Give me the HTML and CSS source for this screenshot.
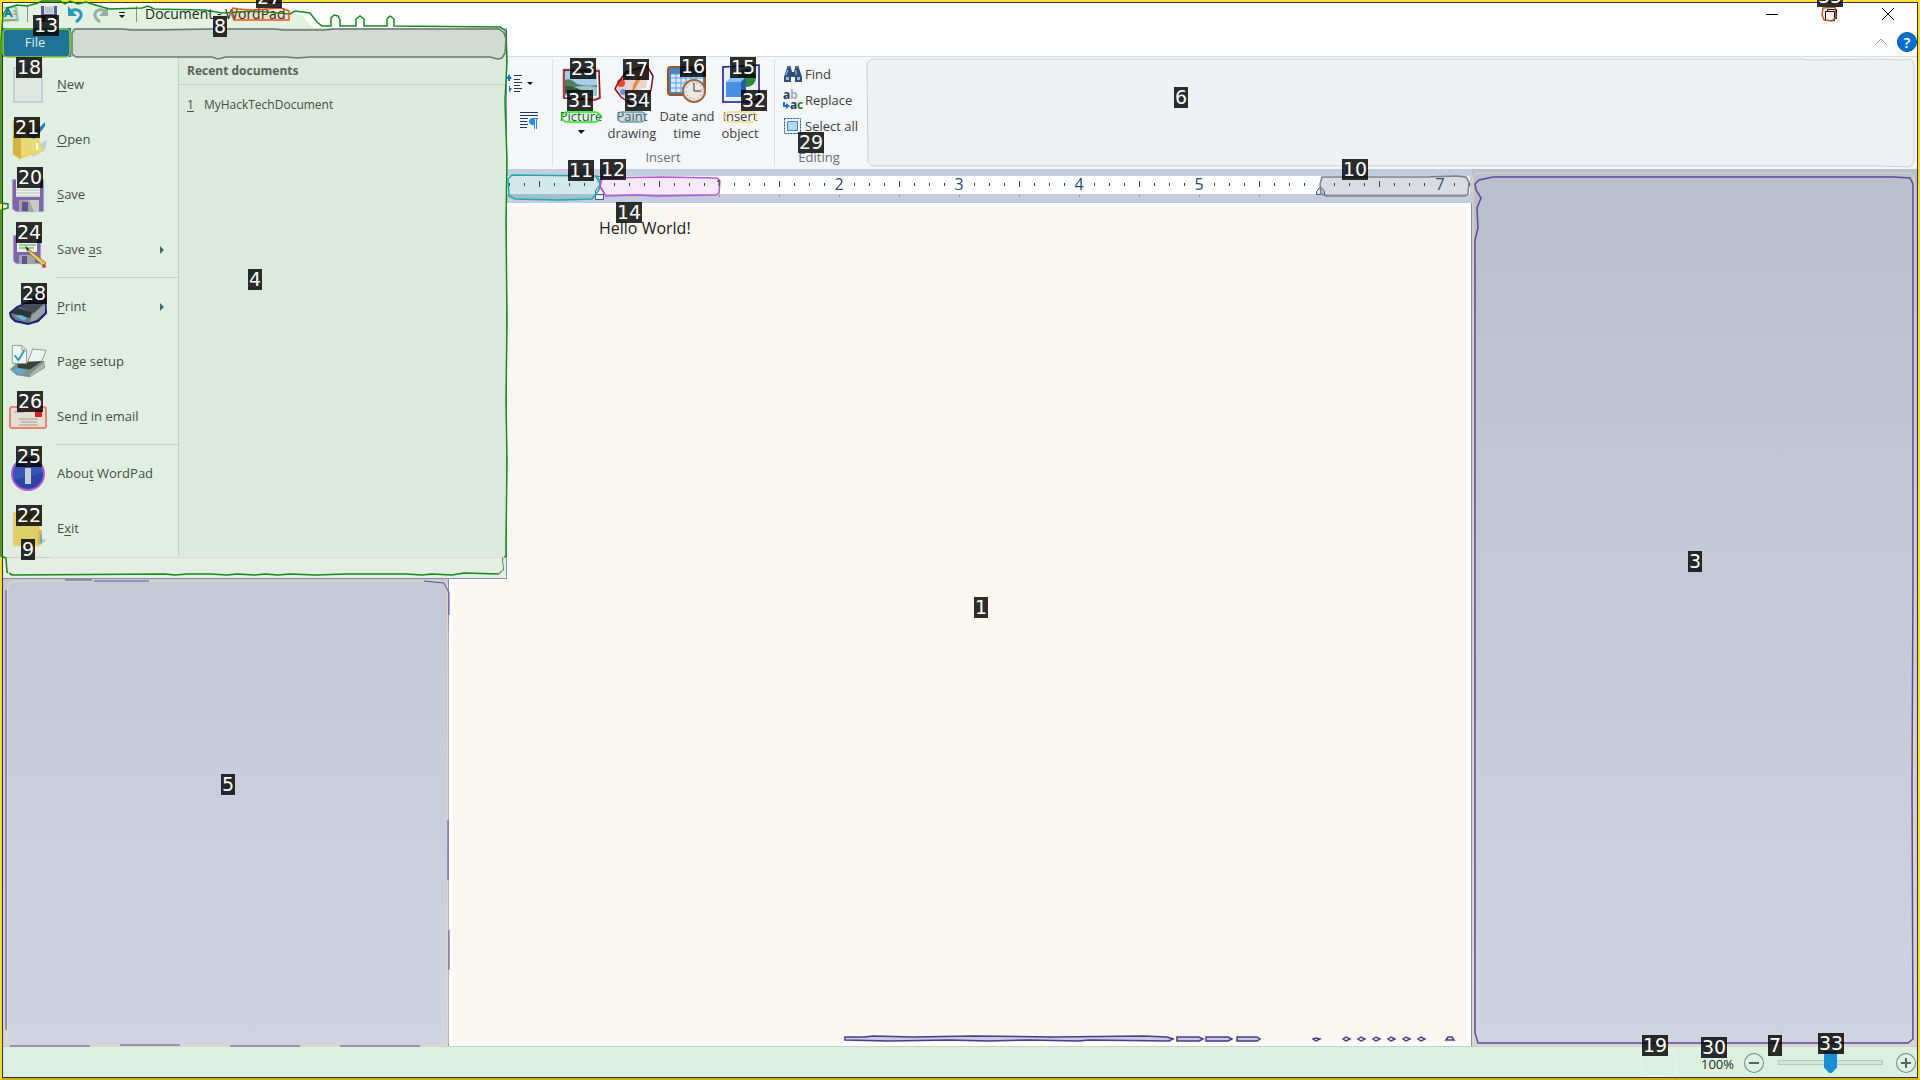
FILE: index.html
```html
<!DOCTYPE html>
<html lang="en">
<head>
<meta charset="utf-8">
<title>Document - WordPad</title>
<link rel="stylesheet" href="styles.css">
</head>
<body>
<div class="window">
  <header class="titlebar">
    <svg class="app-icon" width="16" height="18" viewBox="0 0 16 18"><path d="M0 2l14-1 2 15-16 1z" fill="#a9cfe0"/><path d="M0 4l12-1 1 11H0z" fill="#e8f4f8"/><path d="M2 12L5 4l4 8M3 9h4" fill="none" stroke="#1979a8" stroke-width="2"/><path d="M10 6h3M10 9h4M2 15h12" stroke="#d0813c"/></svg>
    <span class="divider"></span>
    <button class="tool" aria-label="Save"><svg width="18" height="18" viewBox="0 0 18 18"><path d="M1 1h16v16H1z" fill="#6a4fa3"/><path d="M4 1h10v8H4z" fill="#eef"/><path d="M5 3h8M5 5h8M5 7h8" stroke="#a8b0c0"/><path d="M5 11h8v6H5z" fill="#b8bcc8"/></svg></button>
    <button class="tool" aria-label="Undo"><svg width="18" height="18" viewBox="0 0 18 18"><path d="M5 6c6-3 11 0 10 5-1 3-2 4-5 6" fill="none" stroke="#2f9bd2" stroke-width="3"/><path d="M2 1v10h9z" fill="#2f9bd2"/></svg></button>
    <button class="tool redo" aria-label="Redo"><svg width="18" height="18" viewBox="0 0 18 18"><path d="M13 6C7 3 2 6 3 11c1 3 2 4 5 6" fill="none" stroke="#a7b8bd" stroke-width="3"/><path d="M16 1v10H7z" fill="#a7b8bd"/></svg></button>
    <button class="tool more" aria-label="Customise toolbar"><svg width="8" height="8" viewBox="0 0 8 8"><path d="M1 0h6v1H1zM1 3h6L4 6z" fill="#111"/></svg></button>
    <span class="divider"></span>
    <span class="title">Document - WordPad</span>
    <div class="controls">
      <button aria-label="Minimise"><svg width="12" height="12" viewBox="0 0 12 12"><path d="M0 6.500h12" stroke="#000"/></svg></button>
      <button aria-label="Restore"><svg width="14" height="14" viewBox="0 0 14 14"><path d="M2.500 4.500h9v9h-9zM4.500 4V2.500h9v9H12" fill="none" stroke="#000"/></svg></button>
      <button aria-label="Close"><svg width="12" height="12" viewBox="0 0 12 12"><path d="M0 0l12 12M12 0L0 12" stroke="#000"/></svg></button>
    </div>
  </header>
  <div class="tabs">
    <button class="plain" aria-label="Minimise ribbon"><svg width="14" height="8" viewBox="0 0 14 8"><path d="M1 7l6-6 6 6" fill="none" stroke="#999"/></svg></button>
    <button class="help" aria-label="Help">?</button>
  </div>

  <section class="ribbon">
    <div class="group paragraph">
      <button class="plain spacing" aria-label="Line spacing"><svg width="28" height="20" viewBox="0 0 28 20"><path d="M0 0l3 5H1v2h-1zM0 0l-3 5h2v2h1zM0 19l3-5H1v-2h-1z" fill="#1a73d8"/><path d="M5 1.500h8M5 5.500h6M5 8.500h8M5 11.500h6M5 14.500h8M5 17.500h6" stroke="#1f3864"/><path d="M18 8h6l-3 3z" fill="#111"/></svg></button>
      <button class="plain marks" aria-label="Paragraph"><svg width="20" height="20" viewBox="0 0 20 20"><path d="M1 2.500h18M1 5.500h18M1 8.500h8M1 11.500h7M1 14.500h8M1 17.500h7" stroke="#1f3864"/><path d="M10 12a4 4 0 0 1 4-4h5v1h-1v10h-1V9h-1v10h-1v-4a4 4 0 0 1-5-3z" fill="#2b88e6"/></svg></button>
    </div>
    <div class="group insert">
      <div class="items">
        <button class="big w50"><svg width="38" height="38" viewBox="0 0 38 38"><path d="M1 4h36v29H1z" fill="#fff" stroke="#aaa"/><path d="M3 6h32v25H3z" fill="#a7cdea"/><path d="M3 15c5-2 8 1 12 4 6 2 14 2 20 1v6H3z" fill="#4f8160"/><path d="M3 24c10-3 20-4 32-2v9H3z" fill="#9fc3c9"/><path d="M3 21c8 0 12 2 16 4l-16 4z" fill="#335c3c"/><path d="M14 8h12v5H18z" fill="#d8ebf8"/></svg><span>Picture</span><svg width="8" height="17" viewBox="0 0 8 17"><path d="M1 5h7L4 9z" fill="#111"/></svg></button>
        <button class="big w52"><svg width="38" height="38" viewBox="0 0 38 38"><path d="M4 20C6 10 18 2 34 1l2 6-3 16c-6 0-8 4-10 11l-9-1C8 30 1 27 4 20z" fill="#e8d3cf"/><circle cx="8" cy="18" r="4" fill="#e0483c"/><circle cx="14" cy="11" r="3" fill="#4b9b50"/><circle cx="10" cy="27" r="3" fill="#6a96d8"/><path d="M34 3L23 22l-4 6 1-8L31 1z" fill="#e5893d"/></svg><span>Paint<br>drawing</span></button>
        <button class="big w58"><svg width="40" height="38" viewBox="0 0 40 38"><rect x="1" y="2" width="37" height="28" rx="3" fill="#4b83c0" stroke="#a2541f" stroke-width="2"/><path d="M4 9h32v18H4z" fill="#dcecfb"/><path d="M4 9h32M4 13h32M4 18h32M4 23h32M9 9v18M14 9v18M19 9v18M24 9v18M29 9v18" stroke="#5b9fe0"/><circle cx="27" cy="26" r="11" fill="#ece9e4" stroke="#9d6947" stroke-width="2"/><circle cx="27" cy="26" r="8" fill="none" stroke="#777" stroke-dasharray="1 3"/><path d="M27 18v8h7" fill="none" stroke="#333"/></svg><span>Date and<br>time</span></button>
        <button class="big w48"><svg width="38" height="38" viewBox="0 0 38 38"><path d="M1 1h36v36H1z" fill="#e8eefa"/><circle cx="26" cy="13" r="9" fill="#2c8a36"/><path d="M5 17l5-5h15l-5 5z" fill="#8cbcf0"/><path d="M5 17h15v15H5z" fill="#4590e2"/><path d="M20 17l5-5v15l-5 5z" fill="#1f5fae"/></svg><span>insert<br>object</span></button>
      </div>
      <span class="caption">Insert</span>
    </div>
    <div class="group editing">
      <div class="links">
        <button class="small"><svg width="22" height="18" viewBox="0 0 22 18"><path d="M1 17v-5L4 3h4l1 4h2l1-4h4l3 9v5h-7v-5H8v5z" fill="#2d4f78"/><path d="M3 12h3v3H3zM14 12h3v3h-3z" fill="#9db8d4"/><path d="M4 1h4v2H4zM12 1h4v2h-4z" fill="#4f7199"/><path d="M5 5l-2 5M13 5v5" stroke="#b5cbe2"/></svg>Find</button>
        <button class="small"><svg width="22" height="26" viewBox="0 0 22 26"><text x="0" y="12" class="ab">a</text><text x="7" y="12" class="ab grey">b</text><text x="7" y="22" class="ab">a</text><text x="14" y="22" class="ab green">c</text><path d="M1 15v4h3" fill="none" stroke="#1a6fd0" stroke-width="2"/><path d="M3 16l4 3-4 3z" fill="#1a6fd0"/></svg>Replace</button>
        <button class="small"><svg width="22" height="18" viewBox="0 0 22 18"><path d="M1.500 1.500h16v15h-16z" fill="none" stroke="#174f8a" stroke-dasharray="2 1"/><path d="M4.500 4.500h10v9h-10z" fill="#b4d8fa" stroke="#3d8ad8"/></svg>Select all</button>
      </div>
      <span class="caption">Editing</span>
    </div>
  </section>

  <main class="workspace">
    <svg class="ruler" height="34" viewBox="0 0 1024 34" width="1024">
      <defs>
        <pattern id="ticks" x="31" y="0" width="120" height="34" patternUnits="userSpaceOnUse">
          <path d="M15 14h1v3h-1zM30 14h1v3h-1zM45 14h1v3h-1zM60 12h1v6h-1zM75 14h1v3h-1zM90 14h1v3h-1zM105 14h1v3h-1z" fill="#1f3b60"/>
        </pattern>
        <pattern id="stops" x="31" y="0" width="60" height="34" patternUnits="userSpaceOnUse"><path d="M0 26h1v2H0z" fill="#8791a8"/></pattern>
      </defs>
      <path d="M0 0h1024v34H0z" fill="#c4ccdf"/>
      <path d="M0 7h1022v18H0z" fill="#fff"/>
      <path d="M0 7h1022v18H0z" fill="url(#ticks)"/>
      <path d="M200 25h630v5H200z" fill="url(#stops)"/>
      <g class="numbers"><text x="391" y="21">2</text><text x="511" y="21">3</text><text x="631" y="21">4</text><text x="751" y="21">5</text><text x="992" y="21">7</text></g>
      <path d="M147.500 7.500h8l-4 7zM147.500 25.500v-4l4-5 4 5v4z" fill="#f2f4f8" stroke="#5a6f8c"/>
      <path d="M147.500 25.500h8v5h-8z" fill="#f2f4f8" stroke="#3f5673"/>
      <path d="M868.500 25.500v-3l4-5 4 5v3z" fill="#dfe5ee" stroke="#3f5673"/>
    </svg>
    <article class="page" contenteditable="true" role="textbox" aria-label="Document text">Hello World!</article>
  </main>

  <footer class="status">
    <span class="percent">100%</span>
    <button class="round" aria-label="Zoom out"><svg width="20" height="20" viewBox="0 0 20 20"><path d="M5 9h10v2H5z" fill="#4f6a5e"/></svg></button>
    <input type="range" class="zoom" min="0" max="100" value="50" aria-label="Zoom">
    <button class="round" aria-label="Zoom in"><svg width="20" height="20" viewBox="0 0 20 20"><path d="M5 9h4V5h2v4h4v2h-4v4H9v-4H5z" fill="#4f6a5e"/></svg></button>
  </footer>

  <nav class="menu">
    <div class="menu-top"><button class="file">File</button><div class="strip"></div></div>
    <div class="menu-body">
      <div class="commands">
        <button class="command"><svg width="38" height="38" viewBox="0 0 38 38"><path d="M5 2h28v34H5z" fill="#e3ebe5" stroke="#c7cedb" stroke-width="2"/><path d="M7 12h24v22H7z" fill="#dfe7e1"/></svg><span><u>N</u>ew</span></button>
        <button class="command"><svg width="38" height="40" viewBox="0 0 38 40"><path d="M20 30l18-10-2 10-12 7z" fill="#c5d0c5"/><path d="M4 0h26v32l-20 7-6-5z" fill="#e2ce5c" stroke="#eed964"/><path d="M12 16l14-3 8 18-22 5z" fill="#e9da78" stroke="#f0d860"/><path d="M4 0l8 13v26l-8-5z" fill="#d0b545"/><path d="M18 15l7 4 5-5 6-8V2l-8 8-10 1z" fill="#277fae"/><path d="M28 23v7" stroke="#fff" stroke-width="2"/></svg><span><u>O</u>pen</span></button>
        <button class="command"><svg width="38" height="38" viewBox="0 0 38 38"><path d="M3 3h32v33H7l-4-3z" fill="#7e66a8" stroke="#d8d4e8"/><path d="M7 3h24v18H7z" fill="#e8efe8"/><path d="M7 14h24M7 17h24M7 20h24" stroke="#bccabd"/><path d="M10 24h20v12H10z" fill="#9ea8a4"/><path d="M13 26h6v9h-6z" fill="#674f94"/><path d="M20 24h10v12h-5z" fill="#c5ccc8"/></svg><span><u>S</u>ave</span></button>
        <button class="command"><svg width="38" height="38" viewBox="0 0 38 38"><path d="M4 4h28v29H7l-3-3z" fill="#7e66a8" stroke="#d8d4e8"/><path d="M8 4h20v17H8z" fill="#e8efe8"/><path d="M10 14h17M10 17h15" stroke="#46ac3c"/><path d="M10 24h16v9H10z" fill="#9ea8a4"/><path d="M13 25h5v8h-5z" fill="#674f94"/><path d="M17 16l3 6 14 13 3-3-15-12z" fill="#e4cb62" stroke="#8a7430"/><circle cx="35" cy="35" r="2" fill="#c8463c"/><path d="M16 15l2 5 2-2z" fill="#2a3128"/></svg><span>Save <u>a</u>s</span><i class="arrow"></i></button>
        <hr>
        <button class="command"><svg width="38" height="38" viewBox="0 0 38 38"><path d="M1 25L8 19 20 14 30 5l6 1 1 19-8 8-10 3-13-3-4-4z" fill="#6c7b7c" stroke="#1a1f78" stroke-width="2"/><path d="M10 19l14-5 11 1-10 10z" fill="#454f52"/><path d="M2 25l7-5 14 4-2 6z" fill="#2b3438"/><path d="M6 28l6-1 6 3-3 3z" fill="#68b4da"/><path d="M21 34l2-7 13-11v8l-9 8z" fill="#96a3a2"/></svg><span><u>P</u>rint</span><i class="arrow"></i></button>
        <button class="command"><svg width="38" height="38" viewBox="0 0 40 38"><path d="M20 18l5-13c5 2 9 0 14 2l-7 17z" fill="#edf3ed" stroke="#8d9a8f"/><path d="M1 27l8-8 28-1 1 7-16 10-14-2z" fill="#7f8f8b"/><path d="M9 20l26-2-13 9-13-2z" fill="#39423f"/><path d="M22 32l15-13v6l-15 10z" fill="#a9b7b0"/><path d="M3 28l6-3 9 4-5 4z" fill="#5cabd2"/><path d="M3.500 1.500h10l5 5v14h-15z" fill="#eef5ef" stroke="#8d9a8f"/><path d="M13.500 1.500v5h5" fill="none" stroke="#8d9a8f"/><path d="M6 12l4 5 6-10" fill="none" stroke="#2b9ac8" stroke-width="2"/></svg><span>Pa<u>g</u>e setup</span></button>
        <button class="command"><svg width="38" height="38" viewBox="0 0 38 38"><rect x="1" y="9" width="36" height="21" rx="2" fill="#e4dfd3" stroke="#f08070" stroke-width="2"/><path d="M26 12h7v7h-7z" fill="#d42020"/><path d="M10 21h19M12 24h16M10 27h19M5 14h10" stroke="#9d9d90"/></svg><span>Sen<u>d</u> in email</span></button>
        <hr>
        <button class="command"><svg width="38" height="38" viewBox="0 0 38 38"><circle cx="19" cy="19" r="16" fill="#2b44a5" stroke="#b05cd0" stroke-width="2"/><path d="M4 17a15 15 0 0 1 30 0c-9 4-18 5-30 8z" fill="#4a65bd" opacity=".5"/><circle cx="19" cy="9" r="3" fill="#aaa"/><path d="M16 13h6v16h-6z" fill="#c9cdd0"/></svg><span>Abou<u>t</u> WordPad</span></button>
        <button class="command"><svg width="38" height="38" viewBox="0 0 38 38"><path d="M30 28l7 2-6 6z" fill="#b5c4b8"/><path d="M4 2h27v34H4z" fill="#dccf68" stroke="#f2d8a8"/><path d="M29 20h4v14h-4z" fill="#d6b84e"/><path d="M32 25v8" stroke="#6aaad0" stroke-width="2"/></svg><span>E<u>x</u>it</span></button>
      </div>
      <div class="recent">
        <h2>Recent documents</h2>
        <a href="#"><u>1</u>MyHackTechDocument</a>
      </div>
    </div>
    <div class="menu-foot"></div>
  </nav>
</div>

<svg class="outlines" width="1920" height="1080" viewBox="0 0 1920 1080" aria-hidden="true">
  <path d="M3 28V15L7 8l10-3 10 1 11-3 4-2h18l5 3 5-3 8 3 7-2 7 2 17 5 33-1 6 2 57 1 17 3 32-2 28 4 5-3 15 2 7 9 5 4z" fill="rgba(0,128,0,.11)"/>
  <path d="M1 40L3 15 7 8l10-3 10 1 11-3 4-2h18l5 3 5-3 8 3 8-2 6 2 17 5 33-1 6-2 6 3 51 1 17 3 32-2L290 14l5-3 15 2 7 9 5 4h9V18l3-3 4 1 2 4v6h16v-7l4-3 4 3v7h23v-7l3-3 4 3v7L500 27l6 4 1 30-2 40 2 60-1 60 1 100-1 80 1 60-1 80v15l-3 2v12l-4 4-35-1-12 2-20-1-10 1-16-1h-60l-30 1-26-1-12 1-13-1-10 1-18-1-10 1-16-1h-24l-12 1-10-1-153 1H12l-5-3-1-14-5-2V210l7-2v-4l-7-1z" fill="none" stroke="#148a1c" stroke-width="1.5"/>
  <path d="M8 577l3-22 45 2h448l-2 15-6 5" fill="none" stroke="#f8e0d8"/>
  <rect x="3" y="29" width="67" height="28" rx="4" fill="none" stroke="#8fcb34" stroke-width="1.5"/>
  <path d="M75 29h47l10 1h22l60-1h60l10 1h40l10-1h165l5 4 2 6-1 14-3 5-4 1-8-2H310l-12 1-12-1h-60l-8 2-6-2H76l-4-3V33z" fill="none" stroke="#6e7672" stroke-width="1.500"/>
  <path d="M233 8l5 1 13 1 15-1 15-1 8 3v9h-55l-3-7z" fill="rgba(255,69,0,.1)" stroke="#f0521c" stroke-width="1.5"/>
  <g fill="none" stroke-width="1.5">
    <path d="M564 70l35 1 1 27-5 2-31-2z" stroke="#8b0f16"/>
    <path d="M618 83l8-11 21-6 6 10-2 14-9 14-9 1-12-8-6-8z" stroke="#8b0f16"/>
    <path d="M723 67l36-2v34l-3 3h-33z" stroke="#151586"/>
    <rect x="562" y="112" width="38" height="10" rx="5" stroke="#12ef1c" fill="rgba(0,255,0,.08)"/>
    <rect x="618" y="112" width="27" height="10" rx="4" stroke="#6b9fa5" fill="rgba(95,158,160,.3)"/>
    <rect x="725" y="112" width="31" height="10" rx="4" stroke="#f0e08a"/>
    <path d="M1823 8l12-1 1 10-4 4-8-1-2-5z" stroke="#b85b36" fill="rgba(200,80,30,.08)"/>
  </g>
  <path d="M872 59h930l10 1 60-1 30 1 9-1 3 5v98l-4 5-30-1H872l-4-4-1-99z" fill="rgba(150,150,150,.06)" stroke="#cfcfd0"/>
  <path d="M512 175l85 1 3 5-1 9-7 9-33 1-44-1-6-3-1-17z" fill="rgba(32,140,150,.2)" stroke="#20aaa8" stroke-width="1.5"/>
  <path d="M602 178l60-1 55 1 3 3-1 12-3 2-60 1-20-1-30 1-6-9z" fill="rgba(186,85,211,.13)" stroke="#ba55d3" stroke-width="1.5"/>
  <path d="M719 180v6M717 182l2-2" stroke="#333"/>
  <path d="M1322 177h104l30-1 10 1 3 5-1 12-3 2h-138l-6-2-1-10z" fill="rgba(100,110,130,.24)" stroke="#808080" stroke-width="1.5"/>
  <g fill="none">
    <rect x="1473" y="173" width="441" height="873" rx="5" stroke="#f0d9b5"/>
    <path d="M1475 184l4-4 14-3h400l17 1 3 6v400l-1 200 1 255-5 4h-430l-3-10V240l3-12-1-20 4-10-5-8z" stroke="#5c4b98" stroke-width="1.5"/>
    <path d="M7 1042V590l2-7 10-2h420l8 3 1 60v400l-4 2H14z" stroke="#f0d9b5"/>
    <path d="M6 1030V590M65 580h27M94 581h55M424 581l20 2 5 10v22M448 820v60M449 930v40M10 1046h80M120 1045h60M230 1046h70M340 1046h80" stroke="#5c4b98"/>
    <path d="M845 1037h20l8-1 40 1 60-1 80 1 90-1 24 1 6 2-4 2-80-1-10 1-50-1-40 1-40-1-60 1-44-1zM1177 1037h22l4 2-4 2h-22zM1206 1037h22l4 2-4 2h-22zM1237 1037h20l3 2-3 2h-20z" fill="#c9cbe2" stroke="#483d8b" stroke-width="1.5"/>
    <path d="M1313 1039l3-1 4 1-4 2zM1343 1039l3-2 4 2-4 2zM1358 1039l3-2 4 2-4 2zM1373 1039l3-2 4 2-4 2zM1388 1039l3-2 4 2-4 2zM1403 1039l3-2 4 2-4 2zM1418 1039l3-2 4 2-4 2zM1446 1040l2-3h4l2 3z" stroke="#483d8b" stroke-width="1.5"/>
    <path d="M1641 1050h34l1 25-34 1z" stroke="#e8f8ec"/>
    <rect x="1701" y="1057" width="34" height="14" rx="4" stroke="#f4edc0"/>
  </g>
</svg>
<div class="tags">
  <b class="t13">13</b><b class="t8">8</b><b class="t27">27</b><b class="t18">18</b><b class="t21">21</b><b class="t20">20</b><b class="t24">24</b><b class="t28">28</b><b class="t4">4</b><b class="t26">26</b><b class="t25">25</b><b class="t22">22</b><b class="t9">9</b><b class="t23">23</b><b class="t17">17</b><b class="t16">16</b><b class="t15">15</b><b class="t31">31</b><b class="t34">34</b><b class="t32">32</b><b class="t29">29</b><b class="t11">11</b><b class="t12">12</b><b class="t14">14</b><b class="t10">10</b><b class="t35">35</b><b class="t6">6</b><b class="t1">1</b><b class="t3">3</b><b class="t5">5</b><b class="t19">19</b><b class="t30">30</b><b class="t7">7</b><b class="t33">33</b>
</div>
</body>
</html>
```
FILE: styles.css
```css
* { box-sizing: border-box; }
html, body { margin: 0; height: 100%; overflow: hidden; }
body { font: 13px/17px "Open Sans", "Noto Sans", sans-serif; color: #3c3c3c; background: #f5dc33; }
button { font: inherit; color: inherit; background: none; border: 0; padding: 0; margin: 0; }
svg { display: block; flex: none; }

.window {
  position: relative; display: flex; flex-direction: column; height: 100vh;
  border: 2px solid #f5dc33; border-top-color: #ffe33a; border-bottom-color: #cfb010;
  background: #fff; overflow: hidden; outline: 1px solid #333; outline-offset: -3px; padding: 1px;
}
.titlebar { display: flex; align-items: center; height: 25px; padding-bottom: 4px; flex: none; }
.divider { width: 1px; height: 16px; background: #8a9a90; margin: 0 12px 0 8px; }
.tool { margin-right: 8px; }
.tool.more { margin: 4px 0 0 0; }
.tool.more + .divider { margin-left: 10px; margin-right: 8px; }
.title { font-size: 14px; color: #1c1c1c; }
.controls { display: flex; margin-left: auto; }
.controls button { width: 58px; height: 20px; display: grid; place-items: center; }

.tabs { display: flex; justify-content: flex-end; align-items: center; gap: 9px; height: 28px; flex: none; }
.help { width: 20px; height: 20px; border-radius: 50%; background: #0a6fd0; border: 1px solid #0a4f98; color: #fff; font-size: 15px; line-height: 18px; font-weight: 600; }

.ribbon { display: flex; height: 113px; flex: none; background: #f5f6f8; border-top: 1px solid #d9dbdd; padding: 2px 0 3px; }
.group { display: flex; flex-direction: column; border-right: 1px solid #dcdfe3; flex: none; }
.paragraph { width: 550px; align-items: flex-end; padding: 15px 13px 0 0; gap: 16px; }
.spacing { margin-right: 2px; }
.spacing svg { overflow: visible; }
.insert { width: 222px; padding: 6px 4px 0 3px; }
.items { display: flex; height: 85px; }
.big { display: flex; flex-direction: column; align-items: center; justify-content: flex-start; gap: 5px; color: #3f4046; white-space: nowrap; }
.big span + svg { margin-top: -5px; }
.w50 { width: 50px; } .w52 { width: 52px; } .w58 { width: 58px; } .w48 { width: 48px; }
.caption { text-align: center; color: #6b6e78; }
.editing { border: 0; padding-top: 2px; width: 88px; }
.links { display: flex; flex-direction: column; height: 89px; padding-left: 8px; }
.small { display: flex; align-items: center; height: 26px; white-space: nowrap; }
.ab { font: bold 12px "Open Sans", sans-serif; fill: #1f3b60; }
.ab.grey { fill: #aaa; }
.ab.green { fill: #1a7a2a; }

.workspace { flex: 1; min-height: 0; display: flex; flex-direction: column; align-items: center; background: linear-gradient(#babfce, #d0d4e1); }
.numbers { font: 16px "Open Sans", sans-serif; fill: #2b4a73; text-anchor: middle; }
.page { width: 1024px; flex: 1; background: #faf7f2; box-shadow: inset 0 0 0 4px #fff; padding: 15px 150px; font-size: 16px; line-height: 20px; color: #222; border: solid #8590ab; border-width: 0 1px; outline: 0; }

.status { display: flex; align-items: center; justify-content: flex-end; height: 31px; flex: none; background: #d9f0e3; border-top: 1px solid #c2d2cc; padding: 1px 1px 0 0; }
.percent { width: 43px; padding-top: 3px; color: #222c28; }
.round { width: 20px; height: 20px; border-radius: 50%; display: grid; place-items: center; background: #dff0e6; box-shadow: 0 0 0 1px #6f8a7e inset; }
.zoom { appearance: none; width: 105px; height: 24px; margin: 0 13px 0 14px; background: none; }
.zoom::-webkit-slider-runnable-track { height: 5px; border: 1px solid #b4cabd; background: #cfe5d8; }
.zoom::-webkit-slider-thumb { appearance: none; width: 13px; height: 22px; margin-top: -10px; background: #188fd4; clip-path: polygon(0 0, 100% 0, 100% 75%, 60% 100%, 40% 100%, 0 75%); }

.menu { position: absolute; left: 1px; top: 26px; width: 504px; background: #e1efe3; border: solid #7f92a8; border-width: 0 1px 1px 0; color: #434f47; }
.menu-top { display: flex; height: 29px; }
.file { width: 68px; background: #1f7496; color: #d9efe4; padding: 0 4px 0 0; }
.strip { flex: 1; background: #d1dbd2; }
.menu-body { display: flex; border-bottom: 1px solid #c3d2c8; }
.commands { width: 176px; border-right: 1px solid #c3d2c8; padding-bottom: 1px; }
.command { display: flex; align-items: center; width: 100%; height: 55px; padding: 0 14px 0 6px; }
.command span { flex: 1; text-align: left; padding-left: 10px; }
.command u, .recent u { text-underline-offset: 2px; }
.arrow { border: solid transparent; border-width: 4px 0 4px 4px; border-left-color: #41687c; }
.commands hr { height: 1px; border: 0; background: #c3d2c8; margin: 0 0 1px 53px; }
.recent { flex: 1; background: #dce9dd; }
.recent h2 { margin: 0; font-size: 12px; line-height: 27px; padding-left: 8px; border-bottom: 1px solid #c3d2c8; color: #56645a; }
.recent a { display: flex; gap: 10px; padding: 11px 8px; font-size: 12px; color: inherit; text-decoration: none; }
.menu-foot { height: 20px; background: #e5eee3; }

.outlines { position: absolute; left: 0; top: 0; pointer-events: none; }
.tags b { position: absolute; padding: 0 1px; font: 19px/21px "DejaVu Sans", sans-serif; color: #fff; background: rgba(0, 0, 0, .82); }
.t13 { left: 33px; top: 15px; } .t8 { left: 213px; top: 16px; } .t27 { left: 256px; top: -13px; }
.t18 { left: 16px; top: 57px; } .t21 { left: 14px; top: 117px; } .t20 { left: 17px; top: 167px; }
.t24 { left: 16px; top: 222px; } .t28 { left: 21px; top: 283px; } .t4 { left: 248px; top: 269px; }
.t26 { left: 17px; top: 391px; } .t25 { left: 16px; top: 446px; } .t22 { left: 16px; top: 505px; }
.t9 { left: 21px; top: 539px; } .t23 { left: 570px; top: 58px; } .t17 { left: 623px; top: 59px; }
.t16 { left: 680px; top: 56px; } .t15 { left: 730px; top: 57px; } .t31 { left: 567px; top: 90px; }
.t34 { left: 625px; top: 90px; } .t32 { left: 741px; top: 90px; } .t29 { left: 798px; top: 132px; }
.t11 { left: 568px; top: 160px; } .t12 { left: 600px; top: 159px; } .t14 { left: 616px; top: 202px; }
.t10 { left: 1342px; top: 159px; } .t35 { left: 1817px; top: -14px; } .t6 { left: 1174px; top: 87px; }
.t1 { left: 974px; top: 597px; } .t3 { left: 1688px; top: 551px; } .t5 { left: 221px; top: 774px; }
.t19 { left: 1642px; top: 1035px; } .t30 { left: 1701px; top: 1037px; } .t7 { left: 1768px; top: 1035px; }
.t33 { left: 1818px; top: 1033px; }
```
